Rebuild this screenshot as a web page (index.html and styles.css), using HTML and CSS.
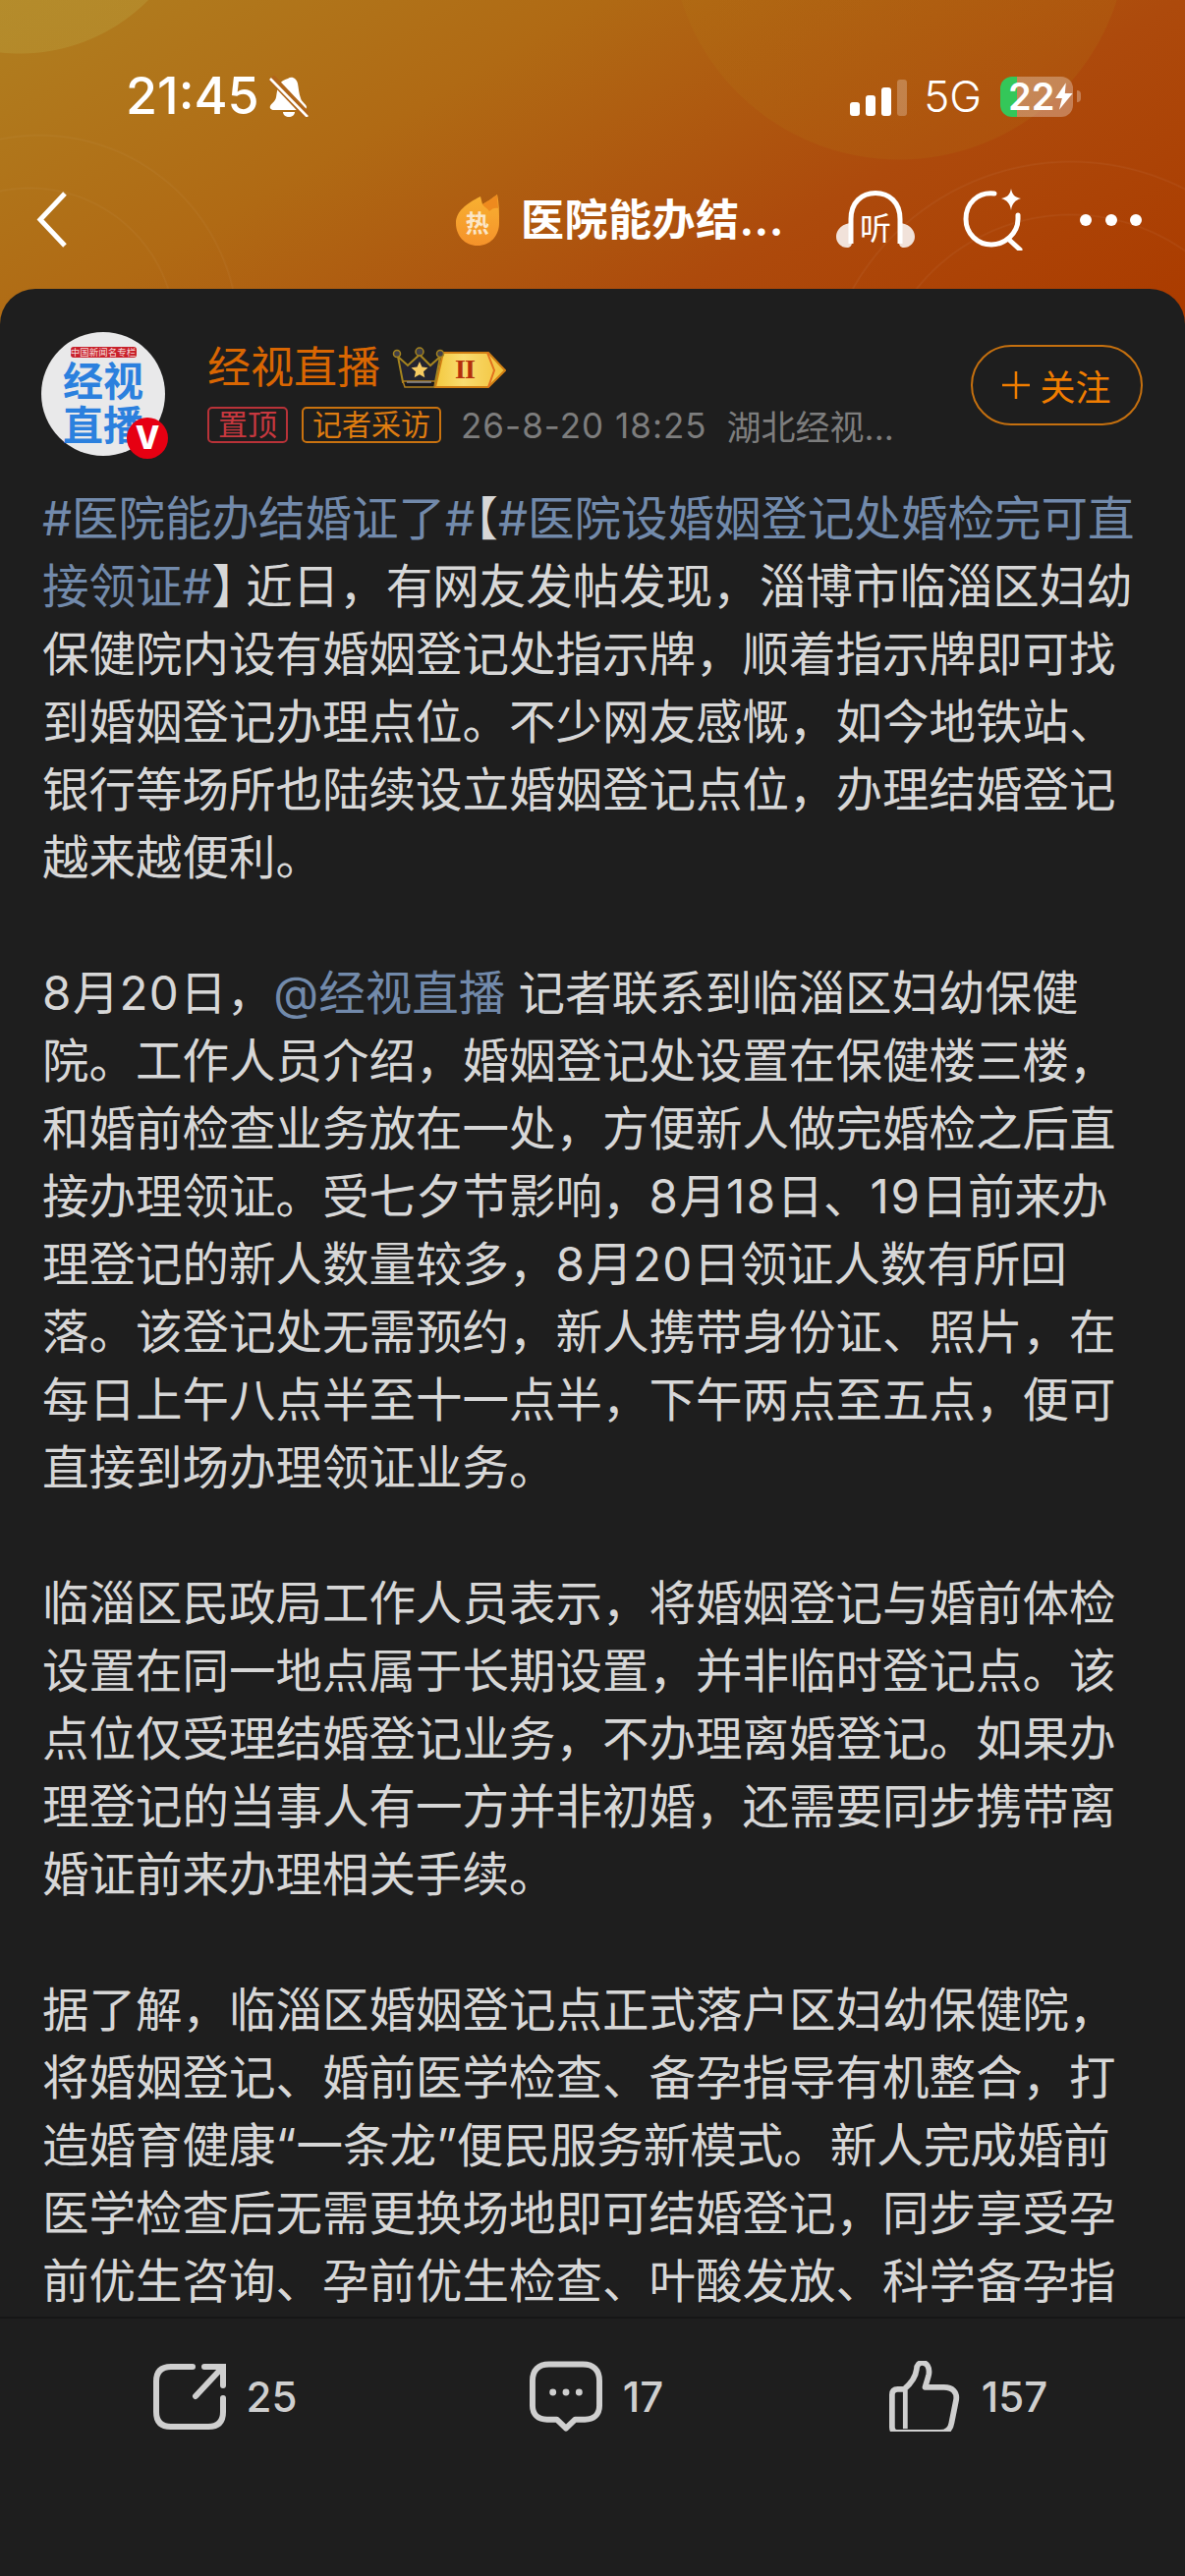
FILE: index.html
```html
<!DOCTYPE html>
<html lang="zh-CN">
<head>
    <meta charset="UTF-8">
    <meta name="viewport" content="width=device-width, initial-scale=1.0">
    <title>经视直播</title>
    <link rel="stylesheet" href="styles.css">
</head>
<body>
    <div class="phone">
        <header class="top">
            <div class="status">
                <div class="status-left">
                    <span class="time">21:45</span>
                    <svg class="bell" viewBox="0 0 40 42">
                        <path d="M19 3c4-3 9 0 10 5 1 5 1 10 3 15 1 4 6 6 6 9 0 2-2 3-4 3H5c-3 0-5-2-4-4 1-3 5-4 6-9 1-5 1-10 4-14 2-3 5-4 8-5z" fill="#fff"/>
                        <path d="M14 37h12c0 3-3 5-6 5s-6-2-6-5z" fill="#fff"/>
                        <path d="M2 2l37 39" stroke="#b0651a" stroke-width="8"/>
                        <path d="M1 3l38 39" stroke="#fff" stroke-width="2.6"/>
                    </svg>
                </div>
                <div class="status-right">
                    <div class="signal">
                        <span class="bar bar-1"></span>
                        <span class="bar bar-2"></span>
                        <span class="bar bar-3"></span>
                        <span class="bar bar-4"></span>
                    </div>
                    <span class="network">5G</span>
                    <div class="battery">
                        <span>22</span>
                        <svg class="bolt" viewBox="0 0 18 28"><path d="M11 0L0 16h7L4 28l14-17h-8z" fill="#fff"/></svg>
                    </div>
                    <span class="battery-nub"></span>
                </div>
            </div>
            <nav class="nav">
                <svg class="back" viewBox="0 0 31 57"><path d="M29 2L4 28.500 29 55" fill="none" stroke="#fff" stroke-width="5"/></svg>
                <div class="nav-title">
                    <svg class="flame" viewBox="0 0 45 52">
                        <defs>
                            <linearGradient id="flame-fill" x1="0" y1="0" x2="0" y2="1">
                                <stop offset="0" stop-color="#f8b232"/>
                                <stop offset="1" stop-color="#f5922a"/>
                            </linearGradient>
                        </defs>
                        <path d="M22 52C9 52 0 42 0 29 0 17 11 9 25 2l2 8c5-3 10-6 15-10 2 9 2 18 2 29 0 13-9 23-22 23z" fill="url(#flame-fill)"/>
                        <path d="M27 10c5-3 10-6 15-10l1 14c-3-1-6 0-9 3-2-3-5-4-7-7z" fill="#ee8a1e"/>
                        <text x="22" y="38" class="flame-text">热</text>
                    </svg>
                    <span>医院能办结...</span>
                </div>
                <div class="nav-actions">
                    <svg class="listen" viewBox="0 0 80 59">
                        <path d="M14 33C3 35 0 42 0 47c0 6 5 11 11 11 3 0 5-2 5-5V34zM66 33c11 2 14 9 14 14 0 6-5 11-11 11-3 0-5-2-5-5V34z" fill="#f1e2da"/>
                        <path d="M15 54V29C15 12 26 2.500 40 2.500S65 12 65 29v25" fill="none" stroke="#fff" stroke-width="5"/>
                        <text x="40" y="50" class="listen-text">听</text>
                    </svg>
                    <svg class="search" viewBox="0 0 61 63">
                        <path d="M32 5C15 3 3 15 3 31c0 15 12 26 26 26s27-12 27-26v-4" fill="none" stroke="#fff" stroke-width="5" stroke-linecap="round"/>
                        <path d="M47 52l11 10" stroke="#fff" stroke-width="5" stroke-linecap="round"/>
                        <path d="M49 0c1 6 4 9 10 10-6 2-9 5-10 12-1-7-4-10-10-12 6-1 9-4 10-10z" fill="#fff"/>
                    </svg>
                    <div class="dots"><span></span><span></span><span></span></div>
                </div>
            </nav>
        </header>

        <main class="card">
            <section class="author">
                <div class="avatar">
                    <span class="avatar-pill">中国新闻名专栏</span>
                    <span class="avatar-name">经视<br>直播</span>
                    <span class="verified">V</span>
                </div>
                <div class="author-info">
                    <div class="name-row">
                        <span class="name">经视直播</span>
                        <svg class="rank" viewBox="0 0 116 42">
                            <defs>
                                <linearGradient id="tag-fill" x1="0" y1="0" x2="1" y2="0">
                                    <stop offset="0" stop-color="#f3c93f"/>
                                    <stop offset="0.4" stop-color="#f9dc70"/>
                                    <stop offset="1" stop-color="#f2c23a"/>
                                </linearGradient>
                            </defs>
                            <path d="M52 6h46l17 18-17 17H44z" fill="url(#tag-fill)" stroke="#d17f14" stroke-width="2"/>
                            <path d="M97 6l7 18-6 17" fill="none" stroke="#e2701f" stroke-width="2"/>
                            <path d="M6 10l10 9L28 8l11 11 10-9-5 26H11z" fill="#24242f" stroke="#a5841f" stroke-width="2"/>
                            <path d="M11 35h33l-1 6H13z" fill="#17171c" stroke="#b0801f" stroke-width="1.500"/>
                            <path d="M15 36h25" stroke="#8c8c90" stroke-width="1.500"/>
                            <circle cx="5" cy="7" r="3.500" fill="#3f3f48" stroke="#a5841f" stroke-width="1.500"/>
                            <circle cx="28" cy="5" r="4" fill="#3f3f48" stroke="#a5841f" stroke-width="1.500"/>
                            <circle cx="49" cy="7" r="3.500" fill="#3f3f48" stroke="#a5841f" stroke-width="1.500"/>
                            <path d="M28 15l2.500 5.500 6 .7-4.500 4 1.300 6L28 28.200l-5.300 3 1.300-6-4.500-4 6-.7z" fill="#f6cb62"/>
                            <text x="74" y="32" class="rank-text">II</text>
                        </svg>
                    </div>
                    <div class="meta-row">
                        <span class="chip chip-red">置顶</span>
                        <span class="chip chip-orange">记者采访</span>
                        <span class="meta meta-date">26-8-20 18:25</span>
                        <span class="meta meta-from">湖北经视...</span>
                    </div>
                </div>
                <button class="follow">
                    <svg class="plus" viewBox="0 0 28 28"><path d="M14 0v28M0 14h28" stroke="#f07d00" stroke-width="2.500"/></svg>
                    关注
                </button>
            </section>

            <article class="post">
                <span class="topic">#医院能办结婚证了#</span><span class="halt">【</span><span class="topic">#医院设婚姻登记处婚检完可直<br>接领证#</span><span class="halt halt-end">】</span>近日，有网友发帖发现，淄博市临淄区妇幼<br>
                保健院内设有婚姻登记处指示牌，顺着指示牌即可找<br>
                到婚姻登记办理点位。不少网友感慨，如今地铁站、<br>
                银行等场所也陆续设立婚姻登记点位，办理结婚登记<br>
                越来越便利。<br>
                <br>
                <span class="num">8</span>月<span class="num">20</span>日，<span class="topic">@经视直播</span> 记者联系到临淄区妇幼保健<br>
                院。工作人员介绍，婚姻登记处设置在保健楼三楼，<br>
                和婚前检查业务放在一处，方便新人做完婚检之后直<br>
                接办理领证。受七夕节影响，<span class="num">8</span>月<span class="num">18</span>日、<span class="num">19</span>日前来办<br>
                理登记的新人数量较多，<span class="num">8</span>月<span class="num">20</span>日领证人数有所回<br>
                落。该登记处无需预约，新人携带身份证、照片，在<br>
                每日上午八点半至十一点半，下午两点至五点，便可<br>
                直接到场办理领证业务。<br>
                <br>
                临淄区民政局工作人员表示，将婚姻登记与婚前体检<br>
                设置在同一地点属于长期设置，并非临时登记点。该<br>
                点位仅受理结婚登记业务，不办理离婚登记。如果办<br>
                理登记的当事人有一方并非初婚，还需要同步携带离<br>
                婚证前来办理相关手续。<br>
                <br>
                据了解，临淄区婚姻登记点正式落户区妇幼保健院，<br>
                将婚姻登记、婚前医学检查、备孕指导有机整合，打<br>
                造婚育健康“一条龙”便民服务新模式。新人完成婚前<br>
                医学检查后无需更换场地即可结婚登记，同步享受孕<br>
                前优生咨询、孕前优生检查、叶酸发放、科学备孕指
            </article>

            <footer class="actions">
                <div class="action">
                    <svg class="icon" viewBox="0 0 74 68">
                        <path d="M40 4H18C8 4 3 9 3 19v31c0 10 5 15 15 15h38c10 0 15-5 15-15V36" fill="none" stroke="#cfcfcf" stroke-width="6" stroke-linecap="round"/>
                        <path d="M43 34L70 5M52 4h19v19" fill="none" stroke="#cfcfcf" stroke-width="6" stroke-linecap="round"/>
                    </svg>
                    <span>25</span>
                </div>
                <div class="action">
                    <svg class="icon" viewBox="0 0 75 72">
                        <path d="M20 3h35c11 0 17 6 17 17v26c0 9-6 14-15 14H47L37.500 69 28 60H18C9 60 3 55 3 46V20C3 9 9 3 20 3z" fill="none" stroke="#cfcfcf" stroke-width="6" stroke-linejoin="round"/>
                        <circle cx="24" cy="32" r="3.500" fill="#cfcfcf"/>
                        <circle cx="37.500" cy="32" r="3.500" fill="#cfcfcf"/>
                        <circle cx="51" cy="32" r="3.500" fill="#cfcfcf"/>
                    </svg>
                    <span>17</span>
                </div>
                <div class="action">
                    <svg class="icon" viewBox="0 0 75 75">
                        <path d="M3 36c0-4 2-6 6-6h7c7-6 12-13 13-21 0-5 3-7 6-7 5 0 8 5 7 12-1 5-3 10-4 14h20c9 0 14 5 13 13l-5 25c-1 7-5 10-12 10H9c-4 0-6-2-6-6z" fill="none" stroke="#cfcfcf" stroke-width="6" stroke-linejoin="round"/>
                        <path d="M17 31v41" stroke="#cfcfcf" stroke-width="5"/>
                    </svg>
                    <span>157</span>
                </div>
            </footer>
        </main>
    </div>
</body>
</html>
```

FILE: styles.css
```css
* {
    box-sizing: border-box;
}
body {
    margin: 0;
    background: #1e1e1e;
    font-family: Inter, "Noto Sans CJK SC", sans-serif;
}
.phone {
    width: 1206px;
    height: 2622px;
    display: flex;
    flex-direction: column;
    overflow: hidden;
    background:
        radial-gradient(circle 185px at 20px -130px, rgba(190, 170, 70, 0.3) 99.500%, transparent 100%),
        radial-gradient(circle 233px at 915px -70px, rgba(178, 120, 20, 0.2) 99.500%, transparent 100%),
        radial-gradient(circle 204px at 40px 340px, transparent 98.500%, rgba(255, 255, 255, 0.04) 99%, transparent 100%),
        radial-gradient(circle 150px at 30px 340px, transparent 98%, rgba(255, 255, 255, 0.04) 99%, transparent 100%),
        radial-gradient(circle 257px at 1090px 420px, transparent 98.800%, rgba(255, 255, 255, 0.05) 99.300%, transparent 100%),
        radial-gradient(circle 203px at 1090px 420px, transparent 98.500%, rgba(255, 255, 255, 0.05) 99.200%, transparent 100%),
        linear-gradient(150deg, #b07f20 0%, #b06a14 34%, #ad4a0c 67%, #ab3c00 96%) 0 0 / 100% 340px no-repeat;
}

/* top bar */
.top {
    height: 294px;
    flex-shrink: 0;
    padding-top: 77px;
}
.status {
    height: 42px;
    display: flex;
    justify-content: space-between;
    align-items: center;
    padding: 0 106px 0 128px;
    color: #fff;
}
.status-left, .status-right {
    display: flex;
    align-items: center;
}
.time {
    font-size: 52px;
    font-weight: 500;
    line-height: 42px;
}
.bell {
    width: 40px;
    height: 42px;
    margin-left: 10px;
}
.signal {
    display: flex;
    align-items: flex-end;
    gap: 6px;
    height: 37px;
    margin-top: 2px;
}
.bar {
    width: 10px;
    background: #fff;
    border-radius: 3px;
}
.bar-1 { height: 14px; }
.bar-2 { height: 21px; }
.bar-3 { height: 29px; }
.bar-4 { height: 37px; background: rgba(255, 255, 255, 0.25); }
.network {
    font-size: 44px;
    font-weight: 300;
    line-height: 42px;
    margin-left: 17px;
}
.battery {
    width: 74px;
    height: 41px;
    margin-left: 19px;
    border-radius: 12px;
    background: linear-gradient(90deg, #34c759 17px, rgba(255, 255, 255, 0.3) 17px);
    display: flex;
    align-items: center;
    padding-left: 8px;
    font-size: 38px;
    font-weight: 600;
    line-height: 41px;
}
.bolt {
    width: 18px;
    height: 28px;
    margin-left: 1px;
}
.battery-nub {
    width: 4px;
    height: 12px;
    margin-left: 4px;
    border-radius: 0 6px 6px 0;
    background: rgba(255, 255, 255, 0.3);
}
.nav {
    display: flex;
    align-items: center;
    height: 63px;
    margin-top: 73px;
    padding: 0 44px 0 37px;
}
.back {
    width: 31px;
    height: 57px;
}
.nav-title {
    margin-left: auto;
    display: flex;
    align-items: center;
    gap: 21px;
    color: #fff;
    font-size: 44px;
    font-weight: 700;
    line-height: 52px;
    letter-spacing: 0.500px;
}
.flame {
    width: 45px;
    height: 52px;
}
.flame-text {
    font-size: 24px;
    font-weight: 700;
    fill: #fbe6c8;
    text-anchor: middle;
}
.nav-actions {
    display: flex;
    align-items: center;
    margin-left: 53px;
}
.listen {
    width: 80px;
    height: 59px;
}
.listen-text {
    font-size: 32px;
    fill: #fff;
    text-anchor: middle;
}
.search {
    width: 61px;
    height: 63px;
    margin-left: 49px;
}
.dots {
    display: flex;
    gap: 13.500px;
    margin-left: 58px;
}
.dots span {
    width: 12px;
    height: 12px;
    border-radius: 50%;
    background: #fff;
}

/* card */
.card {
    flex: 1;
    min-height: 0;
    display: flex;
    flex-direction: column;
    background: #1e1e1e;
    border-radius: 36px 36px 0 0;
}
.author {
    display: flex;
    align-items: flex-start;
    height: 199px;
    flex-shrink: 0;
    padding: 44px 43px 0 42px;
}
.avatar {
    position: relative;
    width: 126px;
    height: 126px;
    flex-shrink: 0;
    border-radius: 50%;
    background: #e9e9ea;
    display: flex;
    flex-direction: column;
    align-items: center;
    padding-top: 15px;
}
.avatar-pill {
    width: 67px;
    height: 11px;
    border-radius: 3px;
    background: #c8202a;
    color: #f6dcdc;
    font-size: 9.500px;
    line-height: 11px;
    text-align: center;
    white-space: nowrap;
}
.avatar-name {
    width: 84px;
    margin-top: 2px;
    color: #2b80de;
    font-size: 41px;
    font-weight: 700;
    line-height: 45px;
    text-align: center;
}
.verified {
    position: absolute;
    left: 87px;
    top: 87px;
    width: 42px;
    height: 42px;
    border-radius: 50%;
    background: #e60012;
    color: #fff;
    font-size: 32px;
    font-weight: 800;
    line-height: 42px;
    text-align: center;
}
.author-info {
    margin-left: 43px;
}
.name-row {
    display: flex;
    align-items: center;
    height: 44px;
    margin-top: 14px;
}
.name {
    color: #d96602;
    font-size: 44px;
    line-height: 44px;
}
.rank {
    width: 116px;
    height: 42px;
    margin-left: 12px;
}
.rank-text {
    font-family: "Liberation Serif", serif;
    font-size: 28px;
    font-weight: 700;
    fill: #b5300c;
    text-anchor: middle;
    letter-spacing: -1px;
}
.meta-row {
    display: flex;
    align-items: center;
    margin-top: 18px;
    height: 37px;
}
.chip {
    height: 37px;
    padding: 0 9px;
    border: 2px solid;
    border-radius: 5px;
    font-size: 30px;
    line-height: 32px;
    white-space: nowrap;
}
.chip-red {
    color: #c8383f;
    border-color: #b83238;
}
.chip-orange {
    color: #df7c10;
    border-color: #c9720f;
    margin-left: 14px;
}
.meta {
    color: #7d7d7d;
    font-size: 35px;
    white-space: nowrap;
}
.meta-date {
    margin-left: 20px;
    letter-spacing: 1px;
}
.meta-from {
    margin-left: 20px;
}
.follow {
    margin-left: auto;
    margin-top: 13px;
    width: 175px;
    height: 82px;
    padding: 0;
    display: flex;
    align-items: center;
    justify-content: center;
    gap: 10px;
    background: none;
    border: 2px solid #c5700f;
    border-radius: 41px;
    color: #f07d00;
    font-family: inherit;
    font-size: 36px;
}
.plus {
    width: 28px;
    height: 28px;
}

/* body text */
.post {
    flex: 1;
    min-height: 0;
    overflow: hidden;
    padding: 0 0 0 43px;
    color: #d7d7d7;
    font-size: 47.500px;
    line-height: 69px;
    white-space: nowrap;
}
.topic {
    color: #728aab;
}
.halt {
    font-feature-settings: "halt";
}
.halt-end {
    margin-right: 11px;
}
.num {
    letter-spacing: 1.500px;
}

/* bottom actions */
.actions {
    height: 264px;
    flex-shrink: 0;
    display: grid;
    grid-template-columns: repeat(3, 1fr);
    padding: 41px 32px 0 40px;
    border-top: 2px solid #161616;
}
.action {
    display: flex;
    justify-content: center;
    align-items: center;
    gap: 21px;
    height: 76px;
    color: #cfcfcf;
    font-size: 42px;
    font-weight: 500;
}
.icon {
    width: 74px;
    height: 72px;
}
```
